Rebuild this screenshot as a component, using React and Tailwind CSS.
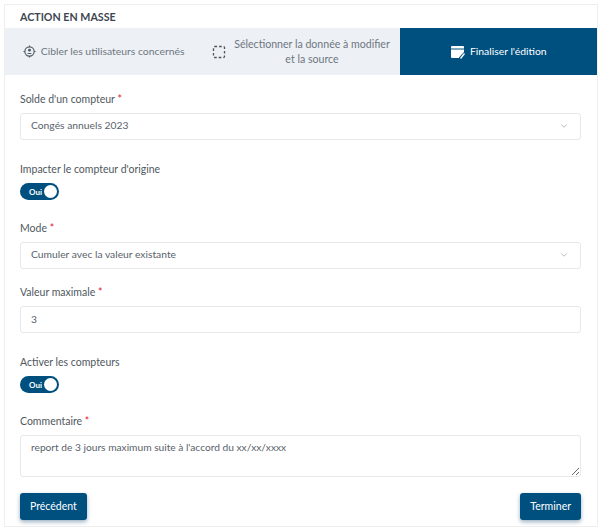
import React from "react";
import { ChevronDown } from "lucide-react";

const Label = ({ children, required }) => (
  <label className="block text-[10.5px] leading-[16px] text-[#4f5860]">
    {children}
    {required && <span className="text-[#e0202c]"> *</span>}
  </label>
);

const Select = ({ value }) => (
  <div className="mt-[6px] h-[27px] flex items-center justify-between rounded-[3px] border border-[#e6e8eb] bg-white pl-[10px] pr-[11px] pb-[2px] text-[10.3px] text-[#59626a]">
    <span>{value}</span>
    <ChevronDown className="w-[10px] h-[10px] text-[#8a9299]" strokeWidth={1.5} />
  </div>
);

const Toggle = () => (
  <div className="mt-[6px] w-[39px] h-[17px] rounded-full bg-[#00507f] flex items-center justify-between pl-[9px] pr-[2px]">
    <span className="text-[8px] font-bold text-white">Oui</span>
    <span className="w-[13px] h-[13px] rounded-full bg-white"></span>
  </div>
);

const TargetIcon = () => (
  <svg width="13" height="13" viewBox="0 0 14 14" fill="none" stroke="#4a5560" strokeWidth="1.2">
    <circle cx="7" cy="7" r="5" />
    <circle cx="7" cy="5.6" r="1.5" fill="#4a5560" stroke="none" />
    <path d="M4.5 9.6c.6-1.3 4.4-1.3 5 0" fill="#4a5560" stroke="none" />
    <path d="M7 0.5v1.5M7 12v1.5M0.5 7H2M12 7h1.5" />
  </svg>
);

const SelectionIcon = () => (
  <svg width="14" height="14" viewBox="0 0 14 14" fill="none" stroke="#4a5560" strokeWidth="1.3">
    <rect x="1.5" y="1.5" width="11" height="11" rx="1" strokeDasharray="2.6 2" />
  </svg>
);

const NoteIcon = () => (
  <svg width="15" height="14" viewBox="0 0 15 14" fill="none">
    <path d="M1 2a1 1 0 0 1 1-1h11a1 1 0 0 1 1 1v5.5L9 13H2a1 1 0 0 1-1-1z" fill="#fff" />
    <path d="M1 4h13" stroke="#00507f" strokeWidth="1" />
    <path d="M14.5 7.5 9.5 13" stroke="#00507f" strokeWidth="1.4" />
    <path d="M14.5 8.5 10.5 13.5" stroke="#fff" strokeWidth="1.3" />
  </svg>
);

const Tab = ({ active, children }) => (
  <div
    className={
      "flex-1 flex items-center justify-center gap-[5px] text-[10.4px] leading-[15px] " +
      (active ? "bg-[#00507f] text-white" : "text-[#6d7780]")
    }
  >
    {children}
  </div>
);

const Button = ({ children }) => (
  <button className="h-[27px] px-[10px] rounded-[3px] bg-[#00507f] text-[10.5px] text-white shadow-[0_2px_4px_rgba(0,60,100,0.4)]">
    {children}
  </button>
);

const App = () => {
  return (
    <div className="w-[600px] h-[532px] bg-white pt-[4px] pl-[4px] font-['Lato',sans-serif]">
      <div className="w-[594px] h-[523px] border border-[#eeeeee]">
        <div className="h-[23px] pl-[15px] pt-[4px] text-[10.7px] leading-[15px] font-bold text-[#3c4650]">
          ACTION EN MASSE
        </div>
        <div className="h-[47px] flex bg-[#edf0f5]">
          <Tab>
            <TargetIcon />
            <span>Cibler les utilisateurs concernés</span>
          </Tab>
          <Tab>
            <SelectionIcon />
            <span className="ml-[3px] text-center text-[10.6px]">
              Sélectionner la donnée à modifier
              <br />
              et la source
            </span>
          </Tab>
          <Tab active>
            <NoteIcon />
            <span>Finaliser l'édition</span>
          </Tab>
        </div>

        <div className="pl-[15px] pr-[16px] pt-[16px]">
          <Label required>Solde d'un compteur</Label>
          <Select value="Congés annuels 2023" />

          <div className="mt-[21px]">
            <Label>Impacter le compteur d'origine</Label>
            <Toggle />
          </div>

          <div className="mt-[20px]">
            <Label required>Mode</Label>
            <Select value="Cumuler avec la valeur existante" />
          </div>

          <div className="mt-[15px]">
            <Label required>Valeur maximale</Label>
            <div className="mt-[6px] h-[27px] flex items-center rounded-[3px] border border-[#e6e8eb] pl-[10px] text-[10.3px] text-[#59626a]">
              3
            </div>
          </div>

          <div className="mt-[21px]">
            <Label>Activer les compteurs</Label>
            <Toggle />
          </div>

          <div className="mt-[20px]">
            <Label required>Commentaire</Label>
            <textarea
              readOnly
              value="report de 3 jours maximum suite à l'accord du xx/xx/xxxx"
              className="mt-[6px] block w-full h-[42px] rounded-[3px] border border-[#e6e8eb] pl-[10px] pt-[3px] text-[10.2px] leading-[16px] text-[#59626a] outline-none"
            />
          </div>

          <div className="mt-[16px] flex justify-between">
            <Button>Précédent</Button>
            <Button>Terminer</Button>
          </div>
        </div>
      </div>
    </div>
  );
};

export default App;
